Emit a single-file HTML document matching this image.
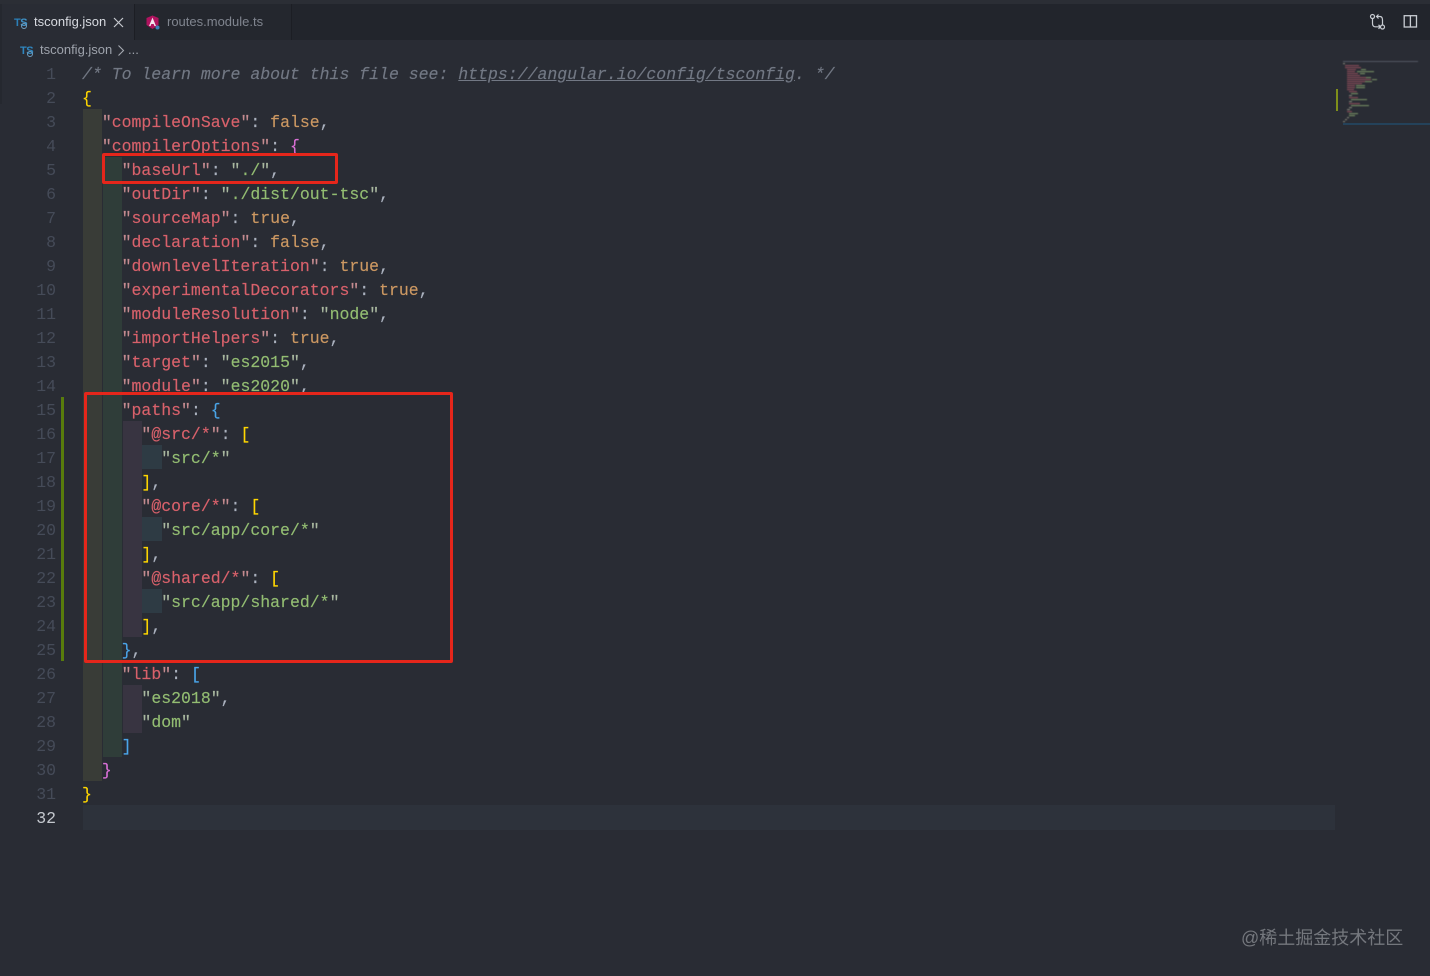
<!DOCTYPE html>
<html><head><meta charset="utf-8">
<style>
html,body{margin:0;padding:0;background:#282c34;}
#p{position:relative;width:1430px;height:976px;overflow:hidden;background:#292c34;}
.a{position:absolute;}
.l{position:absolute;left:82px;height:24px;margin-top:2px;font:16.5px/24px "Liberation Mono",monospace;white-space:pre;color:#abb2bf;-webkit-text-stroke:.15px currentColor;}
.n{position:absolute;left:0;width:56px;margin-top:2px;text-align:right;height:24px;font:16.5px/24px "Liberation Mono",monospace;color:#454b58;}
.k{color:#d8616b}.s{color:#93bd72}.b{color:#cc9862}.p{color:#abb2bf}
.k .p{color:#c48b90}.s .p{color:#a9b8a0}
.g{color:#ffd700}.o{color:#da70d6}.c{color:#4aa5e8}
.cm{color:#727884;font-style:italic}
.u{font:13px/16px "Liberation Sans",sans-serif;white-space:pre;position:absolute;}
</style></head><body><div id="p">
<div class="a" style="left:0;top:0;width:1430px;height:4px;background:#2b2e35"></div>
<div class="a" style="left:0;top:4px;width:1430px;height:36px;background:#22252c"></div>
<div class="a" style="left:0;top:4px;width:134px;height:36px;background:#292c34"></div>
<div class="a" style="left:134px;top:4px;width:1px;height:36px;background:#1c1e24"></div>
<div class="a" style="left:135px;top:4px;width:156px;height:36px;background:#24272e"></div>
<div class="a" style="left:291px;top:4px;width:1px;height:36px;background:#1c1e24"></div>
<div class="a" style="left:0;top:4px;width:2px;height:100px;background:#25282f"></div>

<div class="a" style="left:14px;top:16px;font:bold 11px/14px 'Liberation Sans',sans-serif;color:#2b7fb8;letter-spacing:-.5px">T<span style="color:#3f93c9">S</span></div>
<div class="a" style="left:21px;top:23px;width:4px;height:4px;border:1.5px solid #6f9fc0;border-radius:50%"></div>
<div class="u" style="left:34px;top:14px;color:#d7dae0;width:75px">tsconfig.json</div>
<svg class="a" style="left:113px;top:17px" width="11" height="11" viewBox="0 0 11 11"><path d="M1 1L10 10M10 1L1 10" stroke="#c6c9cf" stroke-width="1.2" fill="none"/></svg>

<svg class="a" style="left:146px;top:15px" width="15" height="16" viewBox="0 0 15 16"><path d="M6.5 0.5L12.5 3V10L6.5 14L.5 10V3Z" fill="#b0135f"/><path d="M6.5 2.5L10 11H8.4L7.7 9H5.3L4.6 11H3Z" fill="#f2e4ee"/><circle cx="11.5" cy="12.5" r="2" fill="#3a80b8"/></svg>
<div class="u" style="left:167px;top:14px;color:#80858f">routes.module.ts</div>

<div class="a" style="left:20px;top:44px;font:bold 11px/14px 'Liberation Sans',sans-serif;color:#2f86bf;letter-spacing:-.5px">TS</div>
<div class="a" style="left:27px;top:51px;width:4px;height:4px;border:1.5px solid #6f9fc0;border-radius:50%"></div>
<div class="u" style="left:40px;top:42px;color:#9ea3ac">tsconfig.json</div>
<svg class="a" style="left:117px;top:45px" width="8" height="11" viewBox="0 0 8 11"><path d="M1.5 .5L6.5 5.5L1.5 10.5" stroke="#a5a9b1" stroke-width="1.1" fill="none"/></svg>
<div class="u" style="left:128px;top:42px;color:#9ea3ac">...</div>

<svg class="a" style="left:1369px;top:13px" width="18" height="18" viewBox="0 0 18 18" fill="none" stroke="#c8ccd2" stroke-width="1.2"><circle cx="3.5" cy="3.5" r="2"/><circle cx="13.5" cy="14" r="2"/><path d="M3.5 5.5V10.5Q3.5 13.5 6 13.8H11.5M9.5 11.8L11.5 13.8L9.5 15.8"/><path d="M13.5 12V7Q13.5 3.6 11 3.5H7.5M9.5 1.5L7.5 3.5L9.5 5.5"/></svg>
<svg class="a" style="left:1403px;top:14px" width="15" height="15" viewBox="0 0 15 15" fill="none" stroke="#c8ccd2" stroke-width="1.3"><rect x="1.2" y="1.7" width="12.3" height="11.3"/><path d="M7.4 1.7V13"/></svg>

<!-- indent guides -->
<div class="a" style="left:83px;top:109px;width:19px;height:672px;background:#393c37"></div>
<div class="a" style="left:103px;top:157px;width:19px;height:600px;background:#2f3d39"></div>
<div class="a" style="left:123px;top:421px;width:19px;height:216px;background:#383441"></div>
<div class="a" style="left:123px;top:685px;width:19px;height:48px;background:#383441"></div>
<div class="a" style="left:142px;top:445px;width:20px;height:24px;background:#2e3b44"></div>
<div class="a" style="left:142px;top:517px;width:20px;height:24px;background:#2e3b44"></div>
<div class="a" style="left:142px;top:589px;width:20px;height:24px;background:#2e3b44"></div>
<div class="a" style="left:83px;top:805px;width:1252px;height:25px;background:#2d323b"></div>
<div class="a" style="left:61px;top:397px;width:3px;height:264px;background:#587c0c"></div>

<div class="n" style="top:61px">1</div><div class="n" style="top:85px">2</div><div class="n" style="top:109px">3</div><div class="n" style="top:133px">4</div><div class="n" style="top:157px">5</div><div class="n" style="top:181px">6</div><div class="n" style="top:205px">7</div><div class="n" style="top:229px">8</div><div class="n" style="top:253px">9</div><div class="n" style="top:277px">10</div><div class="n" style="top:301px">11</div><div class="n" style="top:325px">12</div><div class="n" style="top:349px">13</div><div class="n" style="top:373px">14</div><div class="n" style="top:397px">15</div><div class="n" style="top:421px">16</div><div class="n" style="top:445px">17</div><div class="n" style="top:469px">18</div><div class="n" style="top:493px">19</div><div class="n" style="top:517px">20</div><div class="n" style="top:541px">21</div><div class="n" style="top:565px">22</div><div class="n" style="top:589px">23</div><div class="n" style="top:613px">24</div><div class="n" style="top:637px">25</div><div class="n" style="top:661px">26</div><div class="n" style="top:685px">27</div><div class="n" style="top:709px">28</div><div class="n" style="top:733px">29</div><div class="n" style="top:757px">30</div><div class="n" style="top:781px">31</div><div class="n" style="top:805px;color:#c4c8ce">32</div>

<div class="l" style="top:61px"><span class="cm">/* To learn more about this file see: <u>https://angular.io/config/tsconfig</u>. */</span></div>
<div class="l" style="top:85px"><span class="g">{</span></div>
<div class="l" style="top:109px">  <span class="k"><span class="p">"</span>compileOnSave<span class="p">"</span></span>: <span class="b">false</span>,</div>
<div class="l" style="top:133px">  <span class="k"><span class="p">"</span>compilerOptions<span class="p">"</span></span>: <span class="o">{</span></div>
<div class="l" style="top:157px">    <span class="k"><span class="p">"</span>baseUrl<span class="p">"</span></span>: <span class="s"><span class="p">"</span>./<span class="p">"</span></span>,</div>
<div class="l" style="top:181px">    <span class="k"><span class="p">"</span>outDir<span class="p">"</span></span>: <span class="s"><span class="p">"</span>./dist/out-tsc<span class="p">"</span></span>,</div>
<div class="l" style="top:205px">    <span class="k"><span class="p">"</span>sourceMap<span class="p">"</span></span>: <span class="b">true</span>,</div>
<div class="l" style="top:229px">    <span class="k"><span class="p">"</span>declaration<span class="p">"</span></span>: <span class="b">false</span>,</div>
<div class="l" style="top:253px">    <span class="k"><span class="p">"</span>downlevelIteration<span class="p">"</span></span>: <span class="b">true</span>,</div>
<div class="l" style="top:277px">    <span class="k"><span class="p">"</span>experimentalDecorators<span class="p">"</span></span>: <span class="b">true</span>,</div>
<div class="l" style="top:301px">    <span class="k"><span class="p">"</span>moduleResolution<span class="p">"</span></span>: <span class="s"><span class="p">"</span>node<span class="p">"</span></span>,</div>
<div class="l" style="top:325px">    <span class="k"><span class="p">"</span>importHelpers<span class="p">"</span></span>: <span class="b">true</span>,</div>
<div class="l" style="top:349px">    <span class="k"><span class="p">"</span>target<span class="p">"</span></span>: <span class="s"><span class="p">"</span>es2015<span class="p">"</span></span>,</div>
<div class="l" style="top:373px">    <span class="k"><span class="p">"</span>module<span class="p">"</span></span>: <span class="s"><span class="p">"</span>es2020<span class="p">"</span></span>,</div>
<div class="l" style="top:397px">    <span class="k"><span class="p">"</span>paths<span class="p">"</span></span>: <span class="c">{</span></div>
<div class="l" style="top:421px">      <span class="k"><span class="p">"</span>@src/*<span class="p">"</span></span>: <span class="g">[</span></div>
<div class="l" style="top:445px">        <span class="s"><span class="p">"</span>src/*<span class="p">"</span></span></div>
<div class="l" style="top:469px">      <span class="g">]</span>,</div>
<div class="l" style="top:493px">      <span class="k"><span class="p">"</span>@core/*<span class="p">"</span></span>: <span class="g">[</span></div>
<div class="l" style="top:517px">        <span class="s"><span class="p">"</span>src/app/core/*<span class="p">"</span></span></div>
<div class="l" style="top:541px">      <span class="g">]</span>,</div>
<div class="l" style="top:565px">      <span class="k"><span class="p">"</span>@shared/*<span class="p">"</span></span>: <span class="g">[</span></div>
<div class="l" style="top:589px">        <span class="s"><span class="p">"</span>src/app/shared/*<span class="p">"</span></span></div>
<div class="l" style="top:613px">      <span class="g">]</span>,</div>
<div class="l" style="top:637px">    <span class="c">}</span>,</div>
<div class="l" style="top:661px">    <span class="k"><span class="p">"</span>lib<span class="p">"</span></span>: <span class="c">[</span></div>
<div class="l" style="top:685px">      <span class="s"><span class="p">"</span>es2018<span class="p">"</span></span>,</div>
<div class="l" style="top:709px">      <span class="s"><span class="p">"</span>dom<span class="p">"</span></span></div>
<div class="l" style="top:733px">    <span class="c">]</span></div>
<div class="l" style="top:757px">  <span class="o">}</span></div>
<div class="l" style="top:781px"><span class="g">}</span></div>

<!-- red boxes -->
<div class="a" style="left:102px;top:153px;width:230px;height:25px;border:3px solid #e5261b;border-radius:2px"></div>
<div class="a" style="left:84px;top:392px;width:363px;height:265px;border:3px solid #e5261b;border-radius:2px"></div>

<!-- minimap -->
<svg class="a" style="left:1336px;top:58px" width="94" height="70" viewBox="0 0 94 70">
<rect x="0" y="31" width="2" height="22" fill="#7f8f1a"/>
<g style="filter:blur(.5px)" opacity=".8">
<rect x="7" y="3" width="75" height="1" fill="#5f646e"/>
<g fill="#96505c">
<rect x="9" y="7" width="14" height="1.2"/><rect x="9" y="9" width="16" height="1.2"/><rect x="11" y="11" width="9" height="1.2"/><rect x="11" y="13" width="8" height="1.2"/><rect x="11" y="15" width="11" height="1.2"/><rect x="11" y="17" width="13" height="1.2"/><rect x="11" y="19" width="20" height="1.2"/><rect x="11" y="21" width="24" height="1.2"/><rect x="11" y="23" width="18" height="1.2"/><rect x="11" y="25" width="15" height="1.2"/><rect x="11" y="27" width="8" height="1.2"/><rect x="11" y="29" width="8" height="1.2"/><rect x="11" y="31" width="7" height="1.2"/><rect x="13" y="33" width="8" height="1.2"/><rect x="13" y="39" width="9" height="1.2"/><rect x="13" y="45" width="11" height="1.2"/><rect x="11" y="53" width="5" height="1.2"/>
</g>
<g fill="#7f9a6a">
<rect x="25" y="11" width="5" height="1.2"/><rect x="21" y="13" width="17" height="1.2"/><rect x="24" y="15" width="5" height="1.2"/><rect x="30" y="19" width="5" height="1.2"/><rect x="36" y="21" width="5" height="1.2"/><rect x="29" y="23" width="7" height="1.2"/><rect x="20" y="27" width="9" height="1.2"/><rect x="20" y="29" width="9" height="1.2"/><rect x="15" y="35" width="7" height="1.2"/><rect x="15" y="41" width="16" height="1.2"/><rect x="15" y="47" width="18" height="1.2"/><rect x="13" y="55" width="9" height="1.2"/><rect x="13" y="57" width="6" height="1.2"/>
</g>
<g fill="#8f8f80">
<rect x="13" y="37" width="3" height="1.2"/><rect x="13" y="43" width="3" height="1.2"/><rect x="13" y="49" width="3" height="1.2"/><rect x="11" y="51" width="3" height="1.2"/><rect x="11" y="59" width="2" height="1.2"/><rect x="9" y="61" width="2" height="1.2"/><rect x="7" y="63" width="2" height="1.2"/><rect x="7" y="5" width="2" height="1.2"/>
</g>
</g>
<rect x="7" y="65" width="87" height="2" fill="#24425a"/>
</svg>

<div class="a" style="left:1241px;top:926px;font:18px/24px 'Liberation Sans','WenQuanYi Zen Hei','Noto Sans CJK SC',sans-serif;color:#74777d;white-space:pre">@稀土掘金技术社区</div>
</div></body></html>
